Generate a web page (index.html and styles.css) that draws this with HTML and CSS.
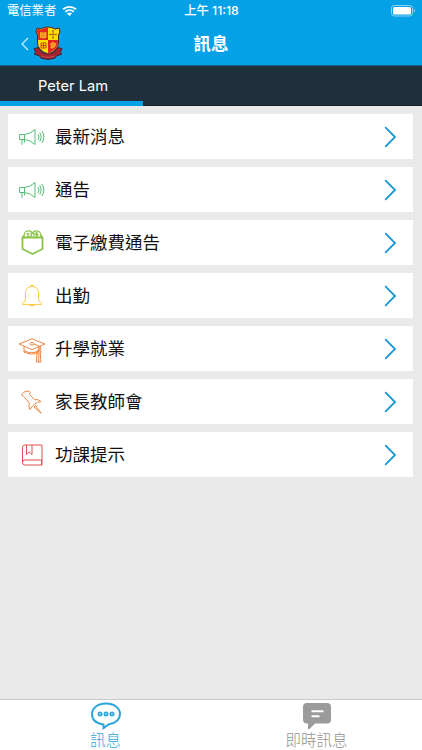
FILE: index.html
```
<!DOCTYPE html>
<html lang="zh-Hant">

<head>
    <meta charset="UTF-8">
    <meta name="viewport" content="width=device-width, initial-scale=1.0">
    <title>訊息</title>
    <link rel="stylesheet" href="styles.css">
</head>

<body>
    <header class="header">
        <div class="status-bar">
            <div class="carrier">
                <span>電信業者</span>
                <svg class="wifi" viewBox="0 0 16 12">
                    <path d="M1.2 4.2C5 .8 11 .8 14.8 4.2M3.5 6.8c2.6-2.3 6.4-2.3 9 0" fill="none" stroke="#fff" stroke-width="2" />
                    <path d="M5.3 8.6c1.6-1.4 3.8-1.4 5.4 0L8 11.4z" fill="#fff" />
                </svg>
            </div>
            <span class="time">上午 11:18</span>
            <svg class="battery" viewBox="0 0 25 12">
                <rect x=".5" y=".5" width="21" height="10.5" rx="2.8" fill="none" stroke="#8fd3f5" />
                <rect x="2" y="2" width="18" height="7.5" rx="1.5" fill="#fff" />
                <path d="M23 4v3.5q1.2-.5 1.2-1.75T23 4z" fill="#8fd3f5" />
            </svg>
        </div>
        <div class="nav-bar">
            <a class="back" href="#">
                <svg class="back-arrow" viewBox="0 0 8 14">
                    <path d="M7 1L1 7l6 6" fill="none" stroke="#d8f2ff" stroke-width="1.1" />
                </svg>
                <svg class="crest" viewBox="0 0 30 35">
                    <path d="M1 22.500l5-1 3 5q5 2.500 12 0l3-5 5 1-1.500 4 1 2-4.500 1-2 2.500q-7 3-14 0L6 29.500l-4.500-1 1-2z" fill="#a8222c" stroke="#32273a" />
                    <path d="M4 2l4 1q3-2 7-2t7 2l4-1 1 4-1.500 3v8q0 7-10.500 11Q4.500 24 4.500 17V9L3 6z" fill="#ffe000" stroke="#54202a" stroke-width="1" />
                    <path d="M4.600 2.800L8 3.800q3-2 7-2V14H5.200V9L3.800 6z" fill="#e52620" />
                    <path d="M15 14h9.900v3q0 6.500-9.900 10.300z" fill="#e52620" />
                    <path d="M7.500 6.500l3 .5 2.500-.5v5l-2.500.5-3-.5zM17.500 18l2-1.500 3 1-.5 3-3 2-1.500-1.500 1.500-1z" fill="#f0912a" stroke="#ffd21c" stroke-width=".7" />
                    <path d="M20 4.500v8M16.500 8.500h7M19 5h2M19 12h2M17 7.500v2M23 7.500v2" fill="none" stroke="#b4691b" />
                    <path d="M8 17h5v5H8zM8 19.500h5M10.500 17v5" fill="none" stroke="#c3431d" />
                    <path d="M8 30q7 2.500 14 0" fill="none" stroke="#df7066" stroke-dasharray="1 .6" />
                </svg>
            </a>
            <h1 class="title">訊息</h1>
        </div>
    </header>

    <div class="tabs">
        <div class="tab active">Peter Lam</div>
    </div>

    <main class="list">
        <a class="row" href="#">
            <svg class="icon green" viewBox="0 0 28 28">
                <path d="M1.500 11.500h5v5h-5zM6.500 11.500Q12 11.200 17 6.500v15q-5-4.700-10.500-5M4 16.500v5.300M6.500 16.500v3M20 11q2 3 0 6M21.800 9.500q3 4.500 0 9M23.800 8q4.200 6 0 12" />
            </svg>
            <span class="label">最新消息</span>
            <svg class="chevron" viewBox="0 0 13 22"><path d="M1.200 1.200L11 11 1.200 20.800" /></svg>
        </a>
        <a class="row" href="#">
            <svg class="icon green" viewBox="0 0 28 28">
                <path d="M1.500 11.500h5v5h-5zM6.500 11.500Q12 11.200 17 6.500v15q-5-4.700-10.500-5M4 16.500v5.300M6.500 16.500v3M20 11q2 3 0 6M21.800 9.500q3 4.500 0 9M23.800 8q4.200 6 0 12" />
            </svg>
            <span class="label">通告</span>
            <svg class="chevron" viewBox="0 0 13 22"><path d="M1.200 1.200L11 11 1.200 20.800" /></svg>
        </a>
        <a class="row" href="#">
            <svg class="icon lime" viewBox="0 0 28 28">
                <path class="pocket" d="M4.500 8.500h20v11.500L14.500 25l-10-5z" />
                <path class="coins" d="M4.500 8.500L7 5.200M24.500 8.500L22 5.200M6.500 8a4.200 4.200 0 0 1 8-3.500a4.200 4.200 0 0 1 8 3.500M13 8q1-2-.5-4M16 8q-1-2 .5-4" />
                <path d="M11 4.500H9V6h2v1.500H9M20 4h-2.500v1.500H20V7h-2.500M18.800 3v5" />
            </svg>
            <span class="label">電子繳費通告</span>
            <svg class="chevron" viewBox="0 0 13 22"><path d="M1.200 1.200L11 11 1.200 20.800" /></svg>
        </a>
        <a class="row" href="#">
            <svg class="icon yellow" viewBox="0 0 28 28">
                <path d="M12.500 4.500V3.300h3v1.200M4.500 22.500h19v-1.700q-3-.8-3-4.300V11q0-6.500-6.500-6.500T7.500 11v5.500q0 3.500-3 4.300z" />
                <path class="clapper" d="M12 22.500h4v1.300h-4z" />
            </svg>
            <span class="label">出勤</span>
            <svg class="chevron" viewBox="0 0 13 22"><path d="M1.200 1.200L11 11 1.200 20.800" /></svg>
        </a>
        <a class="row" href="#">
            <svg class="icon orange" viewBox="0 0 28 28">
                <path d="M1 9l13-5.200L27 9l-13 5.500zM6 11.500V17q8 4 14.500 0v-4.500M6 15.700q8 4 14.500 0" />
                <ellipse cx="14" cy="8.800" rx="2" ry="1.300" />
                <path d="M16 9l5 2.200v5M22.300 11v5M18.900 16h4v2h-4zM19 18l-.6 9h4.600l-.8-9M20.800 19v8" />
            </svg>
            <span class="label">升學就業</span>
            <svg class="chevron" viewBox="0 0 13 22"><path d="M1.200 1.200L11 11 1.200 20.800" /></svg>
        </a>
        <a class="row" href="#">
            <svg class="icon orange" viewBox="0 0 28 28">
                <path d="M3.800 7.200Q4 3.500 10.800 3l1.500 1.500-1 1.700 5.300 5.500q3.500-.8 6.400 1.800-7 1-11 8-1.800-2.700-.7-6.700L5.500 8.200zM17.500 17.500l5.700 7.800-7.200-6.300z" />
            </svg>
            <span class="label">家長教師會</span>
            <svg class="chevron" viewBox="0 0 13 22"><path d="M1.200 1.200L11 11 1.200 20.800" /></svg>
        </a>
        <a class="row" href="#">
            <svg class="icon red" viewBox="0 0 28 28">
                <path d="M7 4h17v20H7q-2.500 0-2.500-2.500v-15Q4.500 4 7 4M24 19H7q-2.500 0-2.500 2.500M23.500 19v5M8.500 4v9.500l2.700-2.500 2.800 2.500V4" />
            </svg>
            <span class="label">功課提示</span>
            <svg class="chevron" viewBox="0 0 13 22"><path d="M1.200 1.200L11 11 1.200 20.800" /></svg>
        </a>
    </main>

    <footer class="bottom-bar">
        <a class="bottom-item selected" href="#">
            <svg class="bottom-icon" viewBox="0 0 32 28">
                <path d="M16 1.500c8 0 14 4.500 14 10.500 0 5.500-4.500 9-11 10.200L13.500 26v-3.500C6.500 21.500 2 18 2 12 2 6 8 1.500 16 1.500z" fill="#fff" stroke="#2ba5da" stroke-width="2" />
                <g fill="#fff" stroke="#2ba5da" stroke-width="1.800">
                    <circle cx="10" cy="12" r="1.600" />
                    <circle cx="16" cy="12" r="1.600" />
                    <circle cx="22" cy="12" r="1.600" />
                </g>
            </svg>
            <span>訊息</span>
        </a>
        <a class="bottom-item" href="#">
            <svg class="bottom-icon" viewBox="0 0 32 28">
                <path d="M6 1h20q4 0 4 4v12.500q0 4-4 4H14L8.500 27q-1.500.8-1.500-1v-4.500H6q-4 0-4-4V5q0-4 4-4z" fill="#9b9b9b" />
                <path d="M10.500 9.300h12M10.500 14.300h8" stroke="#fff" stroke-width="2" />
            </svg>
            <span>即時訊息</span>
        </a>
    </footer>
</body>

</html>
```
FILE: styles.css
```
* {
    box-sizing: border-box;
}

body {
    margin: 0;
    height: 100vh;
    display: flex;
    flex-direction: column;
    overflow: hidden;
    background-color: #eaeaea;
    font-family: Inter, "Noto Sans CJK TC", sans-serif;
}

a {
    color: inherit;
    text-decoration: none;
}

svg {
    display: block;
    flex: none;
}

.header {
    height: 66px;
    flex: none;
    background-color: #05a1e7;
    border-bottom: 1px solid #176487;
    color: #ffffff;
}

/* Status bar */
.status-bar {
    height: 22px;
    padding: 0 6px 0 7px;
    display: grid;
    grid-template-columns: 1fr auto 1fr;
    align-items: center;
    font-size: 12.3px;
    line-height: 22px;
}

.carrier {
    display: flex;
    align-items: center;
    gap: 6px;
}

.wifi {
    width: 15px;
    height: 12px;
}

.time {
    font-weight: 500;
}

.battery {
    width: 25px;
    height: 12px;
    justify-self: end;
}

/* Navigation bar */
.nav-bar {
    height: 43px;
    padding-left: 21px;
    display: grid;
    grid-template-columns: 1fr auto 1fr;
    align-items: center;
}

.back {
    display: flex;
    align-items: center;
    gap: 4px;
}

.back-arrow {
    width: 8px;
    height: 14px;
}

.crest {
    width: 30px;
    height: 35px;
}

.title {
    margin: 0;
    padding-right: 21px;
    font-size: 17.4px;
    font-weight: 700;
    line-height: 43px;
}

.tabs {
    height: 40px;
    flex: none;
    background-color: #20303a;
    border-bottom: 1px solid #172129;
    display: flex;
}

.tab {
    width: 143px;
    height: 40px;
    padding-left: 3px;
    color: #ffffff;
    font-size: 14.7px;
    line-height: 40px;
    text-align: center;
}

.tab.active {
    border-bottom: 5px solid #05a1e7;
}

/* Menu */
.list {
    flex: 1;
    padding: 8px 9px 0 8px;
    display: flex;
    flex-direction: column;
    gap: 8px;
}

.row {
    height: 45px;
    padding: 0 16px 0 10px;
    display: flex;
    align-items: center;
    background-color: #ffffff;
}

.icon {
    width: 28px;
    height: 28px;
    fill: none;
    stroke: currentColor;
    stroke-width: 1;
    stroke-linejoin: round;
}

.label {
    flex: 1;
    margin-left: 9px;
    color: #111111;
    font-size: 17.5px;
    line-height: 46px;
}

.chevron {
    width: 13px;
    height: 22px;
    fill: none;
    stroke: #1998d5;
    stroke-width: 1.8;
}

.green {
    color: #55bd78;
}

.lime {
    color: #8cc34b;
}

.yellow {
    color: #f6cd4c;
}

.orange {
    color: #ed8542;
}

.red {
    color: #e45153;
}

.pocket {
    stroke-width: 1.8;
}

.coins {
    stroke-width: 1.3;
}

.clapper {
    fill: currentColor;
}

/* Bottom tabs */
.bottom-bar {
    height: 51px;
    flex: none;
    display: flex;
    background-color: #ffffff;
    border-top: 1px solid #c9c9c9;
}

.bottom-item {
    flex: 1;
    padding-top: 2px;
    display: flex;
    flex-direction: column;
    align-items: center;
    color: #929292;
    font-size: 15.5px;
    font-weight: 300;
    line-height: 21px;
}

.bottom-item.selected {
    color: #2ba5da;
}

.bottom-icon {
    width: 32px;
    height: 28px;
}
```
